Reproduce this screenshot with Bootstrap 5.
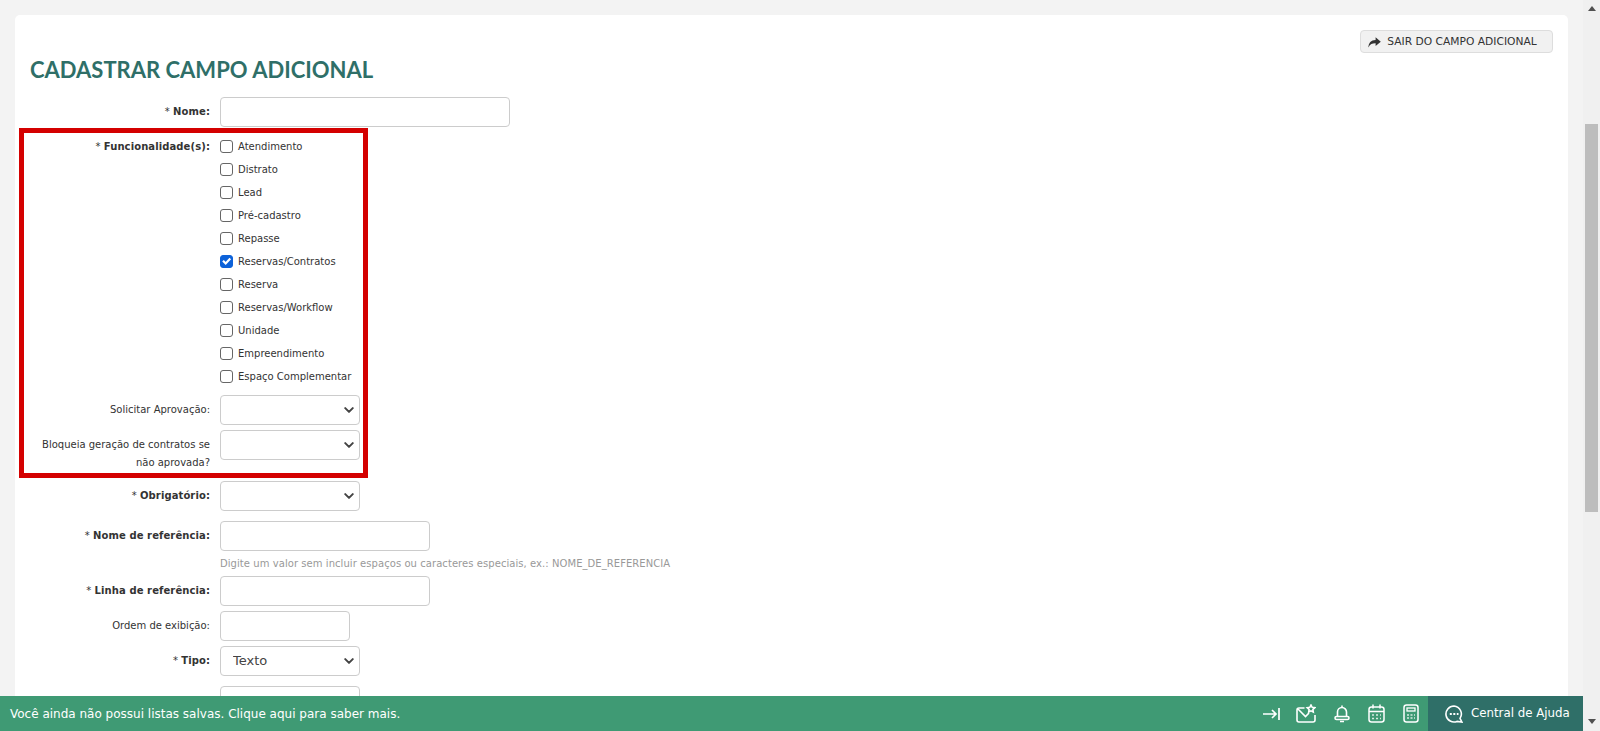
<!DOCTYPE html>
<html lang="pt-BR">
<head>
    <meta charset="UTF-8">
    <meta name="viewport" content="width=device-width, initial-scale=1.0">
    <title>Cadastrar Campo Adicional</title>
    <link href="https://cdn.jsdelivr.net/npm/bootstrap@5.3.2/dist/css/bootstrap.min.css" rel="stylesheet">
    <style>
        html, body {
            height: 100%;
            margin: 0;
            overflow: hidden;
            background-color: #f3f3f3;
            color: #333;
            font-family: "DejaVu Sans", Verdana, sans-serif;
            font-size: 10px;
        }
        .page-shell {
            height: 100vh;
        }
        .page-main {
            min-width: 0;
            overflow: hidden;
            padding: 15px 15px 0 15px;
        }
        .form-sheet {
            background-color: #fff;
            border-radius: 5px 5px 0 0;
            padding: 15px 15px 0 4px;
            min-height: 800px;
        }
        .exit-btn {
            height: 23px;
            width: 193px;
            background-color: #f1f1f1;
            border: 1px solid #ddd;
            border-radius: 4px;
            color: #333;
            font-size: 10.7px;
            padding: 2px 8px 0 0;
            gap: 6px;
        }
        .sheet-title {
            font-family: Lato, sans-serif;
            font-weight: 700;
            font-size: 22px;
            line-height: 30px;
            color: #2f6f68;
            margin: 2px 0 12px 11px;
        }
        .field-row {
            display: flex;
            gap: 10px;
            padding-left: 5px;
        }
        .red-box {
            width: 349px;
            border: 5px solid #d40000;
            margin: 1px 0 3px 0;
            padding-top: 2px;
            height: 350px;
        }
        .red-box .field-row {
            padding-left: 0;
        }
        .field-label {
            width: 186px;
            flex: none;
            text-align: right;
            line-height: 18px;
            padding-top: 6px;
            margin: 0;
        }
        .field-label b {
            font-weight: 700;
            letter-spacing: .1px;
        }
        .check-label {
            padding-top: 3px;
        }
        .form-control.field-box, .form-select.field-box {
            height: 30px;
            min-height: 30px;
            border: 1px solid #ccc;
            border-radius: 4px;
            box-shadow: none;
            padding: 0 30px 0 12px;
            font-size: 13px;
            color: #444;
            font-family: "DejaVu Sans", Verdana, sans-serif;
        }
        .form-select.field-box {
            background-image: url("data:image/svg+xml,%3csvg xmlns='http://www.w3.org/2000/svg' viewBox='0 0 16 16'%3e%3cpath fill='none' stroke='%23444' stroke-linecap='round' stroke-linejoin='round' stroke-width='3.2' d='m2 5 6 6 6-6'/%3e%3c/svg%3e");
            background-position: right 5px center;
            background-size: 10px 10px;
        }
        .box-w290 { width: 290px; }
        .box-w210 { width: 210px; }
        .box-w140 { width: 140px; }
        .box-w130 { width: 130px; }
        .check-list {
            display: flex;
            flex-direction: column;
            margin-bottom: 7px;
        }
        .check-item {
            display: flex;
            align-items: center;
            height: 23px;
            gap: 5px;
        }
        .check-item .form-check-input {
            width: 13px;
            height: 13px;
            margin: 0;
            border-color: #666;
            border-radius: 3px;
            flex: none;
        }
        .check-item .form-check-input:checked {
            background-color: #0d62d9;
            border-color: #0d62d9;
            background-image: url("data:image/svg+xml,%3csvg xmlns='http://www.w3.org/2000/svg' viewBox='0 0 20 20'%3e%3cpath fill='none' stroke='%23fff' stroke-linecap='square' stroke-width='4' d='m5 10 3.500 3.500 7-7.500'/%3e%3c/svg%3e");
        }
        .gap-s { margin-bottom: 5px; }
        .gap-m { margin-bottom: 10px; }
        .hint-text {
            color: #999;
            margin: 6px 0 5px 201px;
            line-height: 14px;
            letter-spacing: .06px;
        }
        .bottom-bar {
            position: fixed;
            left: 0;
            right: 17px;
            bottom: 0;
            height: 35px;
            background-color: #3f9a74;
            color: #fff;
        }
        .bar-msg {
            padding-left: 10px;
            font-size: 12px;
        }
        .bar-icons {
            gap: 18px;
            padding-right: 9px;
        }
        .bar-icons svg:first-child {
            margin-right: -2px;
        }
        .help-tab {
            width: 155px;
            height: 100%;
            background-color: #2f6f68;
            font-size: 11.8px;
            padding-left: 17px;
            gap: 8px;
        }
        .fake-scroll {
            width: 17px;
            flex: none;
            background-color: #f0f0f0;
        }
        .scroll-thumb {
            width: 13px;
            height: 388px;
            margin: 113px auto 0;
            background-color: #bdbdbd;
        }
        .scroll-arrow {
            width: 0;
            height: 0;
            margin: 0 auto;
            border-left: 4px solid transparent;
            border-right: 4px solid transparent;
        }
        .arrow-up {
            margin-top: 6px;
            border-bottom: 5px solid #505050;
        }
        .arrow-down {
            margin-top: auto;
            margin-bottom: 7px;
            border-top: 5px solid #505050;
        }
    </style>
</head>
<body>
<div class="page-shell d-flex">
    <main class="page-main flex-grow-1">
        <div class="form-sheet">
            <div class="d-flex justify-content-end">
                <button type="button" class="btn exit-btn d-flex align-items-center justify-content-center">
                    <svg width="13" height="11" viewBox="0 0 13 11"><path fill="#333" d="M7.600 0.300 12.800 4.700 7.600 9V6.300C4.600 6.200 2.200 7 0.400 10.400 0.500 6 3 2.900 7.600 2.900Z"/></svg>
                    SAIR DO CAMPO ADICIONAL
                </button>
            </div>
            <h1 class="sheet-title">CADASTRAR CAMPO ADICIONAL</h1>

            <div class="field-row">
                <label class="field-label">* <b>Nome:</b></label>
                <input type="text" class="form-control field-box box-w290">
            </div>

            <div class="red-box">
                <div class="field-row">
                    <label class="field-label check-label">* <b>Funcionalidade(s):</b></label>
                    <div class="check-list">
                        <label class="check-item"><input class="form-check-input" type="checkbox">Atendimento</label>
                        <label class="check-item"><input class="form-check-input" type="checkbox">Distrato</label>
                        <label class="check-item"><input class="form-check-input" type="checkbox">Lead</label>
                        <label class="check-item"><input class="form-check-input" type="checkbox">Pré-cadastro</label>
                        <label class="check-item"><input class="form-check-input" type="checkbox">Repasse</label>
                        <label class="check-item"><input class="form-check-input" type="checkbox" checked>Reservas/Contratos</label>
                        <label class="check-item"><input class="form-check-input" type="checkbox">Reserva</label>
                        <label class="check-item"><input class="form-check-input" type="checkbox">Reservas/Workflow</label>
                        <label class="check-item"><input class="form-check-input" type="checkbox">Unidade</label>
                        <label class="check-item"><input class="form-check-input" type="checkbox">Empreendimento</label>
                        <label class="check-item"><input class="form-check-input" type="checkbox">Espaço Complementar</label>
                    </div>
                </div>
                <div class="field-row gap-s">
                    <label class="field-label">Solicitar Aprovação:</label>
                    <select class="form-select field-box box-w140"><option></option></select>
                </div>
                <div class="field-row">
                    <label class="field-label">Bloqueia geração de contratos se não aprovada?</label>
                    <select class="form-select field-box box-w140"><option></option></select>
                </div>
            </div>

            <div class="field-row gap-m">
                <label class="field-label">* <b>Obrigatório:</b></label>
                <select class="form-select field-box box-w140"><option></option></select>
            </div>
            <div class="field-row">
                <label class="field-label">* <b>Nome de referência:</b></label>
                <input type="text" class="form-control field-box box-w210">
            </div>
            <div class="hint-text">Digite um valor sem incluir espaços ou caracteres especiais, ex.: NOME_DE_REFERENCIA</div>
            <div class="field-row gap-s">
                <label class="field-label">* <b>Linha de referência:</b></label>
                <input type="text" class="form-control field-box box-w210">
            </div>
            <div class="field-row gap-s">
                <label class="field-label">Ordem de exibição:</label>
                <input type="text" class="form-control field-box box-w130">
            </div>
            <div class="field-row gap-m">
                <label class="field-label">* <b>Tipo:</b></label>
                <select class="form-select field-box box-w140"><option>Texto</option></select>
            </div>
            <div class="field-row">
                <label class="field-label"></label>
                <select class="form-select field-box box-w140"><option></option></select>
            </div>
        </div>
    </main>
    <aside class="fake-scroll d-flex flex-column">
        <div class="scroll-arrow arrow-up"></div>
        <div class="scroll-thumb"></div>
        <div class="scroll-arrow arrow-down"></div>
    </aside>
</div>

<footer class="bottom-bar d-flex align-items-center justify-content-between">
    <div class="bar-msg">Você ainda não possui listas salvas. Clique aqui para saber mais.</div>
    <div class="d-flex align-items-center h-100">
        <div class="bar-icons d-flex align-items-center">
            <svg width="17" height="14" viewBox="0 0 17 14" fill="none" stroke="#fff" stroke-width="1.700"><path d="M0 7H13M9 3l4 4-4 4M16 1v12"/></svg>
            <svg width="20" height="19" viewBox="0 0 20 19" fill="none" stroke="#fff" stroke-width="1.600"><path d="M8.500 4H3A2 2 0 0 0 1 6V16A2 2 0 0 0 3 18H17A2 2 0 0 0 19 16V11M2 5 9.500 12.500 13 9"/><path d="M15 1l1.200 2.300 2.600.4-1.900 1.800.4 2.500-2.300-1.200-2.300 1.200.4-2.500-1.900-1.800 2.600-.4Z"/></svg>
            <svg width="16" height="18" viewBox="0 0 16 18" fill="none" stroke="#fff" stroke-width="1.600"><path d="M8 .5V2.500M3.500 11.500V7a4.500 4.500 0 0 1 9 0V11.500M6 16.500H10"/><rect x="1" y="11.500" width="14" height="3" rx="1.500"/></svg>
            <svg width="17" height="19" viewBox="0 0 17 19" fill="none" stroke="#fff" stroke-width="1.500"><rect x="1" y="3" width="15" height="15" rx="2.500"/><path d="M1 7.500H16M5 .5V4.500M12 .5V4.500"/><path stroke-dasharray="2 2" stroke-opacity=".8" d="M4 11H13M4 14.500H13"/></svg>
            <svg width="16" height="19" viewBox="0 0 16 19" fill="none" stroke="#fff" stroke-width="1.500"><rect x="1" y="1" width="14" height="17" rx="2.500"/><rect x="4" y="4" width="8" height="3" stroke-width="1.300"/><path stroke-dasharray="2 1.500" stroke-opacity=".8" d="M4 11H12M4 14H12"/></svg>
        </div>
        <div class="help-tab d-flex align-items-center">
            <svg width="18" height="18" viewBox="0 0 18 18" fill="none" stroke="#fff" stroke-width="1.600"><path d="M9 1a8 8 0 1 0 3 15.400L16.800 17 15 13.400A8 8 0 0 0 9 1Z"/><path stroke-dasharray="2 1.500" stroke-width="2" d="M4.800 9H13.500"/></svg>
            <span>Central de Ajuda</span>
        </div>
    </div>
</footer>

<script src="https://cdn.jsdelivr.net/npm/bootstrap@5.3.2/dist/js/bootstrap.bundle.min.js"></script>
</body>
</html>
